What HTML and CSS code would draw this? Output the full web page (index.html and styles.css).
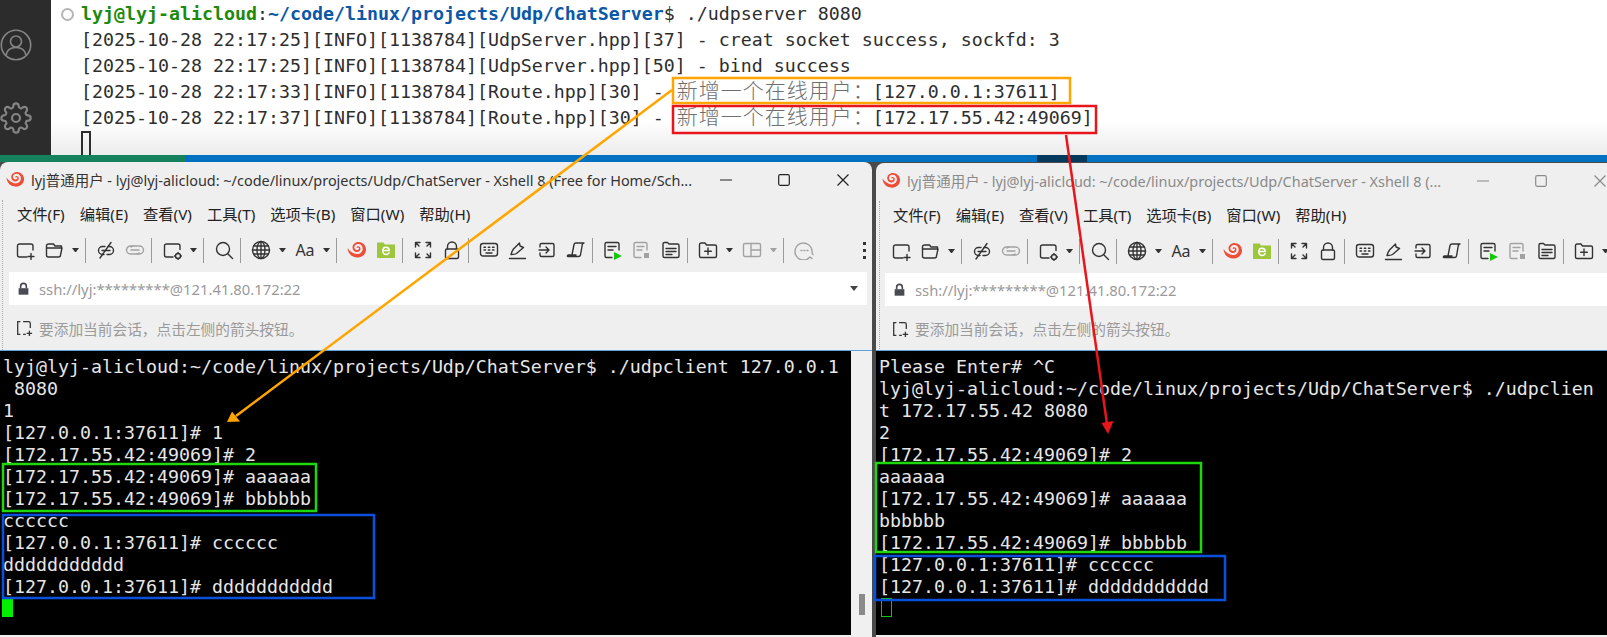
FILE: index.html
```html
<!DOCTYPE html>
<html lang="zh">
<head>
<meta charset="utf-8">
<title>Xshell</title>
<link rel="stylesheet" href="styles.css">
</head>
<body>
<svg class="sprite" width="0" height="0">
  <defs>
    <symbol id="i-new" viewBox="0 0 20 20"><path d="M18 10V6a2 2 0 0 0-2-2H4.500a2 2 0 0 0-2 2v9a2 2 0 0 0 2 2H12"/><path d="M16 13.500v6M13 16.500h6"/></symbol>
    <symbol id="i-open" viewBox="0 0 20 20"><path d="M2.500 8V6a2 2 0 0 1 2-2h5l1.500 2h6.500V8H2.500v7a2 2 0 0 0 2 2h10a2 2 0 0 0 2-2l1.500-7"/></symbol>
    <symbol id="i-unlink" viewBox="0 0 20 20"><path d="M9 6.500H6.500a4 4 0 0 0 0 8H8M11 14.500h2.500a4 4 0 0 0 0-8H12M6 10.500h8"/><path d="M15 2.500 4 18"/></symbol>
    <symbol id="i-link" viewBox="0 0 20 20"><path d="M8 6H5.500a4 4 0 0 0 0 8H12a4 4 0 0 0 2-1"/><path d="M12 14h2.500a4 4 0 0 0 0-8H8a4 4 0 0 0-2 1M6 10h8"/></symbol>
    <symbol id="i-scog" viewBox="0 0 20 20"><path d="M18 9.500V6a2 2 0 0 0-2-2H4.500a2 2 0 0 0-2 2v9a2 2 0 0 0 2 2H11"/><circle cx="16" cy="16" r="2.500"/><path d="M16 12.500v1M16 18.500v1M12.500 16h1M18.500 16h1"/></symbol>
    <symbol id="i-search" viewBox="0 0 20 20"><circle cx="9" cy="9" r="6.500"/><path d="m14 14 4.500 4.500"/></symbol>
    <symbol id="i-globe" viewBox="0 0 20 20"><circle cx="10" cy="10" r="8.500"/><ellipse cx="10" cy="10" rx="4" ry="8.500"/><path d="M10 1.500v17M1.500 10h17M2.700 6h14.600M2.700 14h14.600"/></symbol>
    <symbol id="i-snail" viewBox="0 0 20 20"><path class="red-fill" d="M0.500 8c.5 6 4.500 9.500 10 9.500 5 0 8.500-3.500 8.500-8 0-4.500-3.500-7.500-7.500-7.500-3.500 0-6 2.500-6 5.500 0 2.500 2 4.500 4.500 4.500 2 0 3.500-1.500 3.500-3.300 0-1.500-1-2.500-2.300-2.500-1 0-1.700.7-1.700 1.500h1.500c.4-.3 1-.1 1 .8 0 .8-.8 1.500-2 1.500-1.500 0-2.700-1.200-2.700-2.700 0-2 1.800-3.300 3.700-3.300 2.700 0 4.700 2.100 4.700 4.700 0 3-2.500 5.400-5.700 5.400C6 14 3 11.500 0.500 8z"/></symbol>
    <symbol id="i-green" viewBox="0 0 20 20"><path class="green-fill" d="M1 2.500h6.500l1.500 2H19V18H1z"/><path class="white-line" d="M6.800 10.500h6.400c0-2-1.500-3.300-3.200-3.300S6.800 8.700 6.800 10.800 8.300 14.500 10 14.500c1.400 0 2.400-.6 3-1.700"/></symbol>
    <symbol id="i-full" viewBox="0 0 20 20"><path d="M2.500 7V2.500H7M13 2.500h4.500V7M2.500 13v4.500H7M17.500 13v4.500H13M3 3l3 3M17 3l-3 3M3 17l3-3M17 17l-3-3"/></symbol>
    <symbol id="i-lock" viewBox="0 0 20 20"><path d="M5.500 9V6.500a4.500 4.500 0 0 1 9 0V9"/><rect x="3.500" y="9" width="13" height="9.500" rx="1.500"/></symbol>
    <symbol id="i-keys" viewBox="0 0 20 20"><rect x="1.500" y="3.500" width="17" height="12.500" rx="2.500"/><path d="M5 7.300h1.500M9.300 7.300h1.500M13.500 7.300H15M5 10h1.500M9.300 10h1.500M13.500 10H15M7 13h6"/></symbol>
    <symbol id="i-pen" viewBox="0 0 20 20"><path d="M3 14.500c.5-2 1-3.500 2.500-5.500l6-6 .5 3 3.500 1.500-7 6c-1.500 1-3 1-5 1zM1.500 18.500h16"/></symbol>
    <symbol id="i-enter" viewBox="0 0 20 20"><path d="M3 7V5a1.500 1.500 0 0 1 1.500-1.500h11A1.500 1.500 0 0 1 17 5v10a1.500 1.500 0 0 1-1.500 1.500h-11A1.500 1.500 0 0 1 3 15v-2M2 10h10M9 7l3 3-3 3"/></symbol>
    <symbol id="i-script" viewBox="0 0 20 20"><path d="M6 15 8 4.500a2 2 0 0 1 2-1.500h8c-1 0-1.500.7-1.700 1.500L14.500 15a2 2 0 0 1-2 1.500h-10a2 2 0 0 1-1-.2c-.3-.4 0-1.300 1-1.300H10"/></symbol>
    <symbol id="i-play" viewBox="0 0 20 20"><path d="M9 17.500H3.500A1.500 1.500 0 0 1 2 16V4a1.500 1.500 0 0 1 1.500-1.500h11A1.500 1.500 0 0 1 16 4v6M5 6.500h8M5 10h5"/><path class="play-fill" d="M11 12l8 4-8 4z"/></symbol>
    <symbol id="i-stop" viewBox="0 0 20 20"><path d="M9 17.500H3.500A1.500 1.500 0 0 1 2 16V4a1.500 1.500 0 0 1 1.500-1.500h10A1.500 1.500 0 0 1 15 4v6M5 6.500h7M5 10h5"/><rect class="stop-fill" x="12" y="13" width="5" height="5"/></symbol>
    <symbol id="i-list" viewBox="0 0 20 20"><path d="M2 4.500V16a1.500 1.500 0 0 0 1.500 1.500h13A1.500 1.500 0 0 0 18 16V5.500A1.500 1.500 0 0 0 16.500 4H8l-1.500-1.500h-3A1.500 1.500 0 0 0 2 4v1M5 8.500h10M5 11.500h10M5 14.500h6"/></symbol>
    <symbol id="i-fplus" viewBox="0 0 20 20"><path d="M1.500 4.500V16A1.500 1.500 0 0 0 3 17.500h14a1.500 1.500 0 0 0 1.500-1.500V6.500A1.500 1.500 0 0 0 17 5H8.500L7 3H3a1.500 1.500 0 0 0-1.500 1.500zM10 8v6.500M6.700 11.200h6.600"/></symbol>
    <symbol id="i-layout" viewBox="0 0 20 20"><rect x="1.500" y="3.500" width="17" height="13" rx="1.500"/><path d="M9 3.500v13M9 10h9.500"/></symbol>
    <symbol id="i-chat" viewBox="0 0 20 20"><path d="M18 18.500l-2-1.500a8.500 8.500 0 1 1 2-5.500c0 1.500 0 2 1 3"/><path d="M7 10.500h1M10 10.500h1M13 10.500h1"/></symbol>
    <symbol id="i-padlock" viewBox="0 0 16 16"><path class="padlock-fill" d="M2 7h12v8H2z"/><path class="padlock-line" d="M4.500 7V4.500a3.500 3.500 0 0 1 7 0V7"/></symbol>
    <symbol id="i-add" viewBox="0 0 20 20"><path d="M6 3H3v14h3M9 3h6a2 2 0 0 1 2 2v5M9 17h3"/><path d="M16 13v6M13 16h6"/></symbol>
    <symbol id="i-min" viewBox="0 0 12 12"><path d="M0 6h12"/></symbol>
    <symbol id="i-max" viewBox="0 0 12 12"><rect x=".7" y=".7" width="10.600" height="10.600" rx="1.500"/></symbol>
    <symbol id="i-close" viewBox="0 0 12 12"><path d="m.5.500 11 11M11.500.500l-11 11"/></symbol>
  </defs>
</svg>

<header class="top">
  <aside class="activity">
    <svg class="act-icon" viewBox="0 0 32 32"><circle cx="16" cy="16" r="14.700"/><circle cx="16" cy="12.500" r="5.500"/><path d="M6 26c1-5 5-7.500 10-7.500s9 2.500 10 7.500"/></svg>
    <svg class="act-icon" viewBox="0 0 24 24"><circle cx="12" cy="12" r="3"/><path d="M19.400 15a1.650 1.650 0 0 0 .33 1.820l.06.06a2 2 0 0 1 0 2.830 2 2 0 0 1-2.830 0l-.06-.06a1.650 1.650 0 0 0-1.820-.33 1.650 1.650 0 0 0-1 1.510V21a2 2 0 0 1-2 2 2 2 0 0 1-2-2v-.09A1.650 1.650 0 0 0 9 19.400a1.650 1.650 0 0 0-1.820.33l-.06.06a2 2 0 0 1-2.830 0 2 2 0 0 1 0-2.830l.06-.06a1.650 1.650 0 0 0 .33-1.820 1.650 1.650 0 0 0-1.510-1H3a2 2 0 0 1-2-2 2 2 0 0 1 2-2h.09A1.650 1.650 0 0 0 4.600 9a1.650 1.650 0 0 0-.33-1.820l-.06-.06a2 2 0 0 1 0-2.830 2 2 0 0 1 2.830 0l.06.06a1.650 1.650 0 0 0 1.820.33H9a1.650 1.650 0 0 0 1-1.510V3a2 2 0 0 1 2-2 2 2 0 0 1 2 2v.09a1.650 1.650 0 0 0 1 1.510 1.650 1.650 0 0 0 1.820-.33l.06-.06a2 2 0 0 1 2.830 0 2 2 0 0 1 0 2.830l-.06.06a1.650 1.650 0 0 0-.33 1.820V9a1.650 1.650 0 0 0 1.510 1H21a2 2 0 0 1 2 2 2 2 0 0 1-2 2h-.09a1.650 1.650 0 0 0-1.510 1z"/></svg>
  </aside>
  <main class="console">
    <span class="dot"></span>
    <div class="log">
      <div class="log-line"><b class="g">lyj@lyj-alicloud</b>:<b class="b">~/code/linux/projects/Udp/ChatServer</b>$ ./udpserver 8080</div>
      <div class="log-line">[2025-10-28 22:17:25][INFO][1138784][UdpServer.hpp][37] - creat socket success, sockfd: 3</div>
      <div class="log-line">[2025-10-28 22:17:25][INFO][1138784][UdpServer.hpp][50] - bind success</div>
      <div class="log-line">[2025-10-28 22:17:33][INFO][1138784][Route.hpp][30] - <span class="cjk">新增一个在线用户：</span>[127.0.0.1:37611]</div>
      <div class="log-line">[2025-10-28 22:17:37][INFO][1138784][Route.hpp][30] - <span class="cjk">新增一个在线用户：</span>[172.17.55.42:49069]</div>
      <div class="log-line"><span class="log-cursor"></span></div>
    </div>
  </main>
</header>

<div class="status"><span class="st-green"></span><span class="st-blue"></span><span class="st-dark"></span><span class="st-end"></span></div>

<div class="desktop">
  <section class="win">
    <i class="grip"></i>
    <div class="head">
      <div class="titlebar">
        <svg class="logo"><use href="#i-snail"/></svg>
        <span class="title">lyj普通用户 - lyj@lyj-alicloud: ~/code/linux/projects/Udp/ChatServer - Xshell 8 (Free for Home/Sch...</span>
        <span class="ctl"><svg class="ctl-i"><use href="#i-min"/></svg></span>
        <span class="ctl"><svg class="ctl-i"><use href="#i-max"/></svg></span>
        <span class="ctl"><svg class="ctl-i"><use href="#i-close"/></svg></span>
      </div>
      <nav class="menu"><span>文件(F)</span><span>编辑(E)</span><span>查看(V)</span><span>工具(T)</span><span>选项卡(B)</span><span>窗口(W)</span><span>帮助(H)</span></nav>
      <div class="tools">
        <svg class="ti"><use href="#i-new"/></svg><svg class="ti"><use href="#i-open"/></svg><i class="caret"></i><i class="sep"></i>
        <svg class="ti"><use href="#i-unlink"/></svg><svg class="ti off"><use href="#i-link"/></svg><i class="sep"></i>
        <svg class="ti"><use href="#i-scog"/></svg><i class="caret"></i><i class="sep"></i>
        <svg class="ti"><use href="#i-search"/></svg><i class="sep"></i>
        <svg class="ti"><use href="#i-globe"/></svg><i class="caret"></i><span class="ti aa">Aa</span><i class="caret"></i><i class="sep"></i>
        <svg class="ti"><use href="#i-snail"/></svg><svg class="ti"><use href="#i-green"/></svg><i class="sep"></i>
        <svg class="ti"><use href="#i-full"/></svg><svg class="ti"><use href="#i-lock"/></svg><i class="sep"></i>
        <svg class="ti"><use href="#i-keys"/></svg><svg class="ti"><use href="#i-pen"/></svg><svg class="ti"><use href="#i-enter"/></svg><svg class="ti"><use href="#i-script"/></svg><i class="sep"></i>
        <svg class="ti"><use href="#i-play"/></svg><svg class="ti off"><use href="#i-stop"/></svg><svg class="ti"><use href="#i-list"/></svg><i class="sep"></i>
        <svg class="ti"><use href="#i-fplus"/></svg><i class="caret"></i><svg class="ti off"><use href="#i-layout"/></svg><i class="caret off-caret"></i><i class="sep"></i>
        <svg class="ti off"><use href="#i-chat"/></svg>
        <span class="dots"><i></i><i></i><i></i></span>
      </div>
      <div class="addr">
        <svg class="addr-lock"><use href="#i-padlock"/></svg>
        <span class="addr-text">ssh://lyj:*********@121.41.80.172:22</span>
        <i class="caret addr-caret"></i>
      </div>
      <div class="hint"><svg class="hint-i"><use href="#i-add"/></svg><span>要添加当前会话，点击左侧的箭头按钮。</span></div>
    </div>
    <div class="body-row">
      <pre class="term">lyj@lyj-alicloud:~/code/linux/projects/Udp/ChatServer$ ./udpclient 127.0.0.1
 8080
1
[127.0.0.1:37611]# 1
[172.17.55.42:49069]# 2
[172.17.55.42:49069]# aaaaaa
[172.17.55.42:49069]# bbbbbb
cccccc
[127.0.0.1:37611]# cccccc
ddddddddddd
[127.0.0.1:37611]# ddddddddddd
<span class="tc"></span></pre>
      <div class="scroll"><i class="thumb"></i></div>
    </div>
  </section>

  <section class="win win-b">
    <i class="grip"></i>
    <div class="head">
      <div class="titlebar">
        <svg class="logo"><use href="#i-snail"/></svg>
        <span class="title">lyj普通用户 - lyj@lyj-alicloud: ~/code/linux/projects/Udp/ChatServer - Xshell 8 (...</span>
        <span class="ctl"><svg class="ctl-i"><use href="#i-min"/></svg></span>
        <span class="ctl"><svg class="ctl-i"><use href="#i-max"/></svg></span>
        <span class="ctl"><svg class="ctl-i"><use href="#i-close"/></svg></span>
      </div>
      <nav class="menu"><span>文件(F)</span><span>编辑(E)</span><span>查看(V)</span><span>工具(T)</span><span>选项卡(B)</span><span>窗口(W)</span><span>帮助(H)</span></nav>
      <div class="tools">
        <svg class="ti"><use href="#i-new"/></svg><svg class="ti"><use href="#i-open"/></svg><i class="caret"></i><i class="sep"></i>
        <svg class="ti"><use href="#i-unlink"/></svg><svg class="ti off"><use href="#i-link"/></svg><i class="sep"></i>
        <svg class="ti"><use href="#i-scog"/></svg><i class="caret"></i><i class="sep"></i>
        <svg class="ti"><use href="#i-search"/></svg><i class="sep"></i>
        <svg class="ti"><use href="#i-globe"/></svg><i class="caret"></i><span class="ti aa">Aa</span><i class="caret"></i><i class="sep"></i>
        <svg class="ti"><use href="#i-snail"/></svg><svg class="ti"><use href="#i-green"/></svg><i class="sep"></i>
        <svg class="ti"><use href="#i-full"/></svg><svg class="ti"><use href="#i-lock"/></svg><i class="sep"></i>
        <svg class="ti"><use href="#i-keys"/></svg><svg class="ti"><use href="#i-pen"/></svg><svg class="ti"><use href="#i-enter"/></svg><svg class="ti"><use href="#i-script"/></svg><i class="sep"></i>
        <svg class="ti"><use href="#i-play"/></svg><svg class="ti off"><use href="#i-stop"/></svg><svg class="ti"><use href="#i-list"/></svg><i class="sep"></i>
        <svg class="ti"><use href="#i-fplus"/></svg><i class="caret"></i>
      </div>
      <div class="addr">
        <svg class="addr-lock"><use href="#i-padlock"/></svg>
        <span class="addr-text">ssh://lyj:*********@121.41.80.172:22</span>
      </div>
      <div class="hint"><svg class="hint-i"><use href="#i-add"/></svg><span>要添加当前会话，点击左侧的箭头按钮。</span></div>
    </div>
    <div class="body-row">
      <pre class="term">Please Enter# ^C
lyj@lyj-alicloud:~/code/linux/projects/Udp/ChatServer$ ./udpclien
t 172.17.55.42 8080
2
[172.17.55.42:49069]# 2
aaaaaa
[172.17.55.42:49069]# aaaaaa
bbbbbb
[172.17.55.42:49069]# bbbbbb
[127.0.0.1:37611]# cccccc
[127.0.0.1:37611]# ddddddddddd
<span class="tc tc-off"></span></pre>
    </div>
  </section>
</div>

<svg class="notes" width="1607" height="637" viewBox="0 0 1607 637">
  <g class="note-orange">
    <rect x="673" y="78" width="397" height="25"/>
    <path d="M672 90 236 416"/>
    <polygon points="227,422 232,411.500 240,421.500"/>
  </g>
  <g class="note-red">
    <rect x="673" y="106" width="423" height="27"/>
    <path d="M1066 135 1107 424"/>
    <polygon points="1108,434 1101.500,423 1113.500,421"/>
  </g>
  <g class="note-green">
    <rect x="3" y="464" width="313" height="47"/>
    <rect x="876" y="463" width="325" height="89"/>
  </g>
  <g class="note-blue">
    <rect x="3" y="515" width="371" height="83"/>
    <rect x="875" y="556" width="350" height="44"/>
  </g>
</svg>
</body>
</html>
```

FILE: styles.css
```css
* { box-sizing: border-box; }
html, body { margin: 0; padding: 0; }
body {
  position: relative;
  width: 1607px;
  height: 637px;
  overflow: hidden;
  background: #4a4a4a;
  font-family: "Noto Sans", "Noto Sans CJK SC", sans-serif;
}
i { display: block; font-style: normal; }
.sprite { position: absolute; }

/* VS Code terminal behind the windows */
.top { display: flex; height: 155px; }
.activity {
  width: 51px;
  flex: none;
  background: #2c2c2c;
  padding-top: 29px;
  display: flex;
  flex-direction: column;
  gap: 41px;
}
.act-icon { width: 32px; height: 32px; fill: none; stroke: #858585; stroke-width: 1.600; }
.console {
  flex: 1;
  display: flex;
  background: linear-gradient(#fff 0, #fff 120px, #ececec 155px);
  padding: 1px 0 0 10px;
  overflow: hidden;
}
.dot {
  width: 13px;
  height: 13px;
  margin: 7px 7px 0 0;
  border: 2px solid #b5b5b5;
  border-radius: 50%;
  flex: none;
}
.log { font: 18.270px/26px "DejaVu Sans Mono", monospace; color: #2e2e2e; }
.log-line { height: 26px; white-space: pre; }
.g { color: #1d8a0c; }
.b { color: #0b57a8; }
.cjk {
  font: 300 21px/0 "Noto Sans CJK SC", sans-serif;
  letter-spacing: 1px;
  color: #6e6e6e;
  margin-left: 2px;
  margin-right: -2px;
}
.log-cursor {
  display: inline-block;
  width: 10px;
  height: 26px;
  border: 2px solid #2e2e2e;
  vertical-align: top;
}

.status { display: flex; height: 7px; }
.st-green { width: 185px; background: #16825d; }
.st-blue { width: 852px; background: #0070c1; }
.st-dark { width: 50px; background: #04395e; }
.st-end { flex: 1; background: #0070c1; }

/* Xshell windows */
.desktop { display: flex; gap: 4px; height: 475px; }
.win {
  position: relative;
  width: 872px;
  flex: none;
  background: #efefef;
  border-radius: 8px 8px 0 0;
  display: flex;
  flex-direction: column;
  overflow: hidden;
}
.win-b {
  width: 753px;
  margin-top: 1px;
  height: 474px;
}
.win-b .head { height: 188px; }
.win-b .title { color: #8a8a8a; }
.win-b .ctl-i { stroke: #8a8a8a; }
.grip {
  position: absolute;
  left: 2px;
  top: 38px;
  height: 150px;
  border-left: 1px dotted #aaa;
}
.win-b .grip { left: 3px; }
.head { height: 189px; flex: none; display: flex; flex-direction: column; border-bottom: 1px solid #5ea3d9; }
.titlebar { height: 35px; flex: none; display: flex; align-items: center; padding-left: 6px; }
.logo { width: 19px; height: 19px; margin-right: 6px; flex: none; }
.title { font-size: 14.450px; color: #333; white-space: nowrap; flex: 1; min-width: 0; overflow: hidden; }
.ctl { width: 58.500px; flex: none; display: flex; justify-content: center; }
.ctl-i { width: 12px; height: 12px; fill: none; stroke: #222; stroke-width: 1.200; }
.menu { height: 35px; flex: none; display: flex; align-items: center; gap: 15px; padding: 0 0 3px 17px; font-size: 15.300px; color: #222; white-space: nowrap; }

.tools { height: 36px; flex: none; display: flex; align-items: center; padding-left: 15px; }
.ti {
  width: 20px;
  height: 20px;
  margin-right: 9px;
  flex: none;
  fill: none;
  stroke: #333;
  stroke-width: 1.400;
  stroke-linecap: round;
  stroke-linejoin: round;
}
.ti.off { stroke: #a2a2a2; }
.aa { font-size: 16px; line-height: 20px; color: #333; text-align: center; white-space: nowrap; }
.caret {
  flex: none;
  margin: 0 9px 0 -1px;
  width: 7px;
  border-left: 3.500px solid transparent;
  border-right: 3.500px solid transparent;
  border-top: 4px solid #333;
}
.off-caret { border-top-color: #a2a2a2; }
.sep { width: 1px; height: 25px; flex: none; background: #9a9a9a; margin: 0 10px 0 -3px; }
.dots { margin-left: auto; margin-right: 6px; display: flex; flex-direction: column; gap: 4px; }
.dots i { width: 3px; height: 3px; background: #333; }
.red-fill { fill: #ee4d38; stroke: none; }
.green-fill { fill: #9dc63c; stroke: none; }
.white-line { stroke: #fff; stroke-width: 1.600; fill: none; }
.play-fill { fill: #16c60c; stroke: none; }
.stop-fill { fill: #a2a2a2; stroke: none; }

.addr {
  height: 33px;
  flex: none;
  margin: 4px 5px 0 9px;
  background: #fff;
  display: flex;
  align-items: center;
  padding-left: 8px;
}
.addr-lock { width: 13px; height: 16px; flex: none; margin-right: 9px; }
.padlock-fill { fill: #4a4a55; stroke: none; }
.padlock-line { fill: none; stroke: #4a4a55; stroke-width: 2; }
.addr-text { font-size: 14.800px; color: #9a9a9a; white-space: nowrap; flex: 1; }
.addr-caret { margin: 0 9px 0 0; width: 8px; border-top-color: #444; border-left-width: 4px; border-right-width: 4px; border-top-width: 5px; }
.win-b .addr { margin-right: 0; }

.hint { flex: 1; display: flex; align-items: center; padding: 1px 0 0 15px; font-size: 14.700px; color: #9a9a9a; white-space: nowrap; }
.hint-i { width: 18px; height: 18px; margin-right: 6px; fill: none; stroke: #333; stroke-width: 1.400; flex: none; }

.body-row { flex: 1; display: flex; min-height: 0; }
.term {
  flex: 1;
  margin: 0 0 2px;
  padding: 5px 0 0 3px;
  background: #000;
  color: #e6e6e6;
  font: 18.270px/22px "DejaVu Sans Mono", monospace;
  overflow: hidden;
  min-width: 0;
}
.tc { display: inline-block; width: 11px; height: 19px; background: #00f000; vertical-align: top; margin-left: -1px; }
.tc-off { background: none; border: 1px solid #12c412; margin-left: 2px; }
.scroll { width: 21px; flex: none; background: #f0f0f0; position: relative; }
.thumb { position: absolute; left: 8px; top: 243px; width: 6px; height: 21px; background: #8a8a8a; }

/* hand-drawn annotations over the screenshot */
.notes { position: absolute; left: 0; top: 0; pointer-events: none; fill: none; stroke-width: 2.500; }
.note-orange { stroke: #ffa500; }
.note-orange polygon { fill: #ffa500; stroke: none; }
.note-red { stroke: #e8151b; }
.note-red polygon { fill: #e8151b; stroke: none; }
.note-green { stroke: #1ed80b; }
.note-blue { stroke: #0a50dc; }
```
